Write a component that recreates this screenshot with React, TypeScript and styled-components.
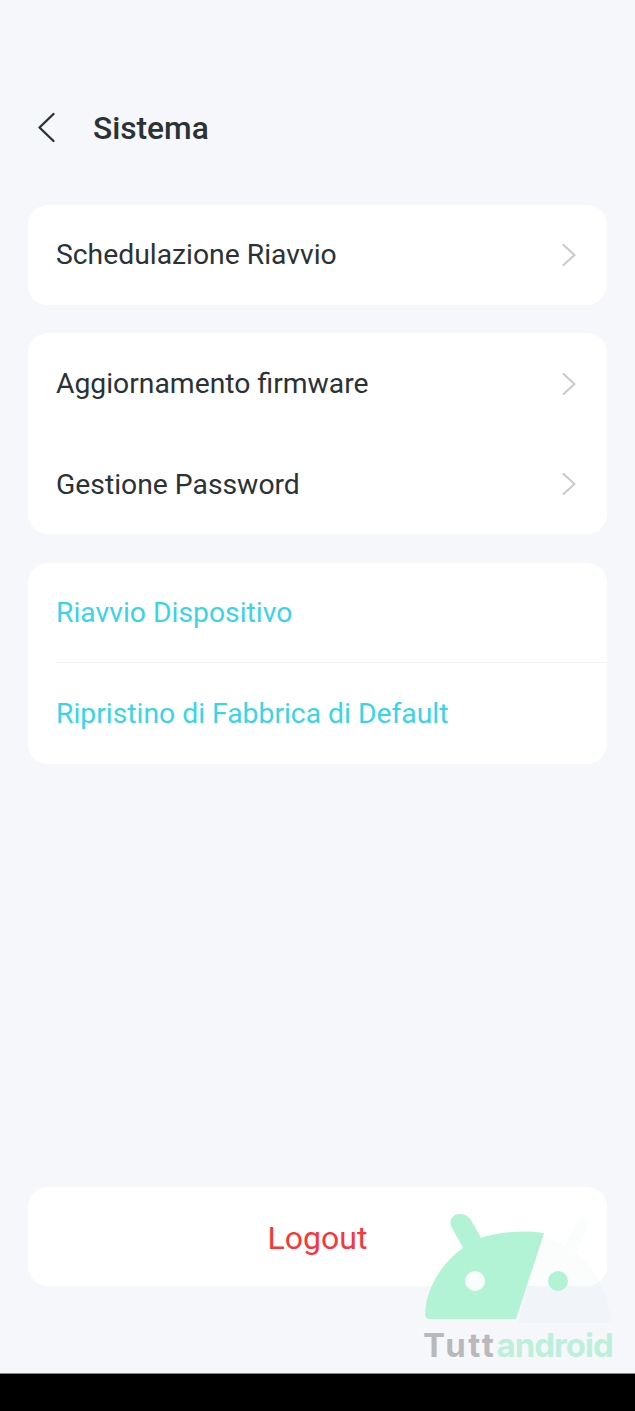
import React from 'react';
import styled, { createGlobalStyle } from 'styled-components';

const GlobalStyle = createGlobalStyle`
  html, body {
    margin: 0;
    padding: 0;
    background: #f5f7fb;
  }
  * {
    box-sizing: border-box;
  }
`;

const Page = styled.div`
  position: relative;
  width: 635px;
  height: 1411px;
  display: flex;
  flex-direction: column;
  background: #f5f7fb;
  font-family: Roboto, "Liberation Sans", sans-serif;
  overflow: hidden;
`;

const Content = styled.div`
  flex: 1;
  display: flex;
  flex-direction: column;
  padding: 103px 28px 87px;
`;

const Header = styled.header`
  display: flex;
  align-items: center;
  gap: 35px;
  height: 50px;
  padding-left: 8px;
  margin-bottom: 51.6px;
`;

const BackButton = styled.button`
  display: flex;
  padding: 0;
  border: none;
  background: none;
  color: #2a3236;
`;

const Title = styled.h1`
  margin: 0;
  font-size: 31.7px;
  font-weight: 500;
  color: #2a3236;
`;

const Card = styled.section`
  background: #fff;
  border-radius: 20px;
  margin-bottom: 28.3px;
  overflow: hidden;
`;

const Row = styled.div<{ $divided?: boolean }>`
  position: relative;
  display: flex;
  align-items: center;
  justify-content: space-between;
  height: 100.5px;
  padding: 0 30px 0 29px;

  ${props => props.$divided && `
    &::after {
      content: '';
      position: absolute;
      left: 28px;
      right: 0;
      bottom: 0;
      height: 1px;
      background: #f1f3f7;
    }
  `}
`;

const Label = styled.span<{ $accent?: boolean }>`
  font-size: 28.3px;
  margin-left: -1px;
  color: ${props => (props.$accent ? '#3bd3e6' : '#2a3236')};
`;

const Chevron = styled.svg`
  width: 16px;
  height: 24px;
  color: #c9cccc;
`;

const LogoutCard = styled.button`
  margin-top: auto;
  height: 99px;
  padding: 2px 0 0;
  border: none;
  border-radius: 20px;
  background: #fff;
  font-family: inherit;
  font-size: 32px;
  color: #f5383c;
`;

const NavBar = styled.div`
  height: 38px;
  background: #000;
  border-top: 1px solid #8a8a8a;
  flex-shrink: 0;
`;

const Watermark = styled.div`
  position: absolute;
  left: 420px;
  top: 1205px;
  width: 200px;
  height: 160px;
`;

const WatermarkLogo = styled.svg`
  display: block;
  width: 200px;
  height: 122px;
`;

const WatermarkText = styled.div`
  margin: 0 0 0 3px;
  font-family: Inter, "Noto Sans", sans-serif;
  font-size: 33px;
  line-height: 36px;
  font-weight: 700;
  letter-spacing: -1px;
  white-space: nowrap;
  color: #bdf0da;

  span {
    letter-spacing: 2.6px;
    color: #b9b9bb;
  }
`;

const RowChevron = () => (
  <Chevron viewBox="0 0 16 24" fill="none" stroke="currentColor" strokeWidth="2.2" strokeLinecap="round" strokeLinejoin="round">
    <path d="M2.5 2 L13.5 12 L2.5 22" />
  </Chevron>
);

export default function App() {
  return (
    <Page>
      <GlobalStyle />
      <Content>
        <Header>
          <BackButton aria-label="Indietro">
            <svg width="22" height="32" viewBox="0 0 22 32" fill="none" stroke="currentColor" strokeWidth="2.4" strokeLinecap="round" strokeLinejoin="round">
              <path d="M17.5 2 L3.5 15.5 L17.5 29" />
            </svg>
          </BackButton>
          <Title>Sistema</Title>
        </Header>

        <Card>
          <Row>
            <Label>Schedulazione Riavvio</Label>
            <RowChevron />
          </Row>
        </Card>

        <Card>
          <Row>
            <Label>Aggiornamento firmware</Label>
            <RowChevron />
          </Row>
          <Row>
            <Label>Gestione Password</Label>
            <RowChevron />
          </Row>
        </Card>

        <Card>
          <Row $divided>
            <Label $accent>Riavvio Dispositivo</Label>
          </Row>
          <Row>
            <Label $accent>Ripristino di Fabbrica di Default</Label>
          </Row>
        </Card>

        <LogoutCard>Logout</LogoutCard>
      </Content>
      <NavBar />

      <Watermark>
        <WatermarkLogo viewBox="420 1205 200 122">
          <path
            d="M544 1233 C528 1230 500 1231 481 1238 L472 1222 Q468 1213 458 1214 Q448 1217 451 1226 L463 1248 C440 1264 426 1290 425 1314 Q425 1319 430 1319 L516 1319 Z"
            fill="#b2f3d6"
          />
          <path
            d="M540 1236 C548 1238 558 1241 566 1246 L575 1224 Q580 1214 588 1218 Q590 1225 586 1232 L575 1252 C596 1270 610 1295 612 1323 L518 1323 Z"
            fill="#8f9096"
            fillOpacity="0.03"
          />
          <circle cx="475" cy="1281" r="10" fill="#fff" fillOpacity="0.9" />
          <circle cx="558" cy="1281" r="10" fill="#b2f3d6" />
        </WatermarkLogo>
        <WatermarkText>
          <span>Tutt</span>android
        </WatermarkText>
      </Watermark>
    </Page>
  );
}
